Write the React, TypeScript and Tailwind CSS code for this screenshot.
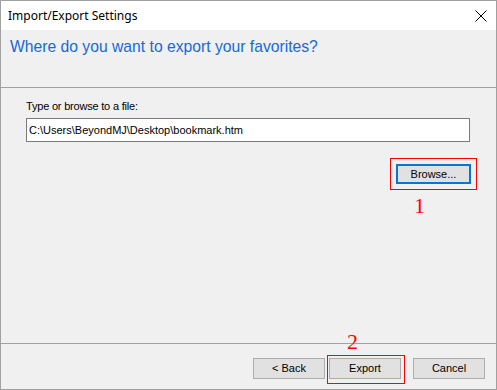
import { useState } from 'react'

const btn =
  'h-[21px] w-[72px] border border-[#adadad] bg-[#e1e1e1] text-[11px] text-black flex items-center justify-center'

export default function App() {
  const [path, setPath] = useState('C:\\Users\\BeyondMJ\\Desktop\\bookmark.htm')

  return (
    <div
      className="relative w-[497px] h-[390px] border border-[#a0a0a0] bg-[#f0f0f0] flex flex-col"
      style={{ fontFamily: '"Liberation Sans", Arial, sans-serif' }}
    >
      {/* Title bar */}
      <div className="h-[29px] bg-white flex items-center justify-between pl-[7px] pr-[9px]">
        <span
          className="text-[12px] text-black"
          style={{ fontFamily: '"Noto Sans", "Open Sans", sans-serif' }}
        >
          Import/Export Settings
        </span>
        <svg width="12" height="12" viewBox="0 0 12 12" className="mt-[1px]">
          <path d="M0.5 0.5 L11.5 11.5 M11.5 0.5 L0.5 11.5" stroke="#000" strokeWidth="1" fill="none" />
        </svg>
      </div>

      {/* Header */}
      <div className="h-[58px] border-b border-[#a0a0a0] pl-[9px] pt-[8px]">
        <h1 className="text-[15.7px] leading-[18px] text-[#1769d6]">
          Where do you want to export your favorites?
        </h1>
      </div>

      {/* Content */}
      <div className="flex-1 flex flex-col pl-[25px] pr-[25px] pt-[12px]">
        <label className="text-[11px] leading-[13px] tracking-[-0.2px] text-black">Type or browse to a file:</label>
        <input
          value={path}
          onChange={(e) => setPath(e.target.value)}
          className="mt-[5px] w-[444px] h-[24px] border border-[#7a7a7a] bg-white px-[2px] text-[11px] text-black outline-none"
        />
        <div className="flex justify-end mt-[22px]">
          <button className="h-[20px] w-[75px] border-2 border-[#0078d7] bg-[#e1e1e1] text-[11px] text-black flex items-center justify-center">
            Browse...
          </button>
        </div>
      </div>

      {/* Footer */}
      <div className="h-[46px] border-t border-[#a0a0a0] flex justify-end items-start pt-[14px] pr-[11px]">
        <button className={btn}>&lt; Back</button>
        <button className={`${btn} ml-[4px]`}>Export</button>
        <button className={`${btn} ml-[12px]`}>Cancel</button>
      </div>

      {/* Annotations */}
      <div className="absolute left-[389px] top-[157px] w-[87px] h-[32px] border border-[#ff0000]" />
      <span
        className="absolute left-[413px] top-[192px] text-[22px] leading-[26px] text-[#ff0000]"
        style={{ fontFamily: '"Liberation Serif", serif' }}
      >
        1
      </span>
      <div className="absolute left-[326px] top-[354px] w-[78px] h-[29px] border border-[#ff0000]" />
      <span
        className="absolute left-[346px] top-[328px] text-[22px] leading-[26px] text-[#ff0000]"
        style={{ fontFamily: '"Liberation Serif", serif' }}
      >
        2
      </span>
    </div>
  )
}
